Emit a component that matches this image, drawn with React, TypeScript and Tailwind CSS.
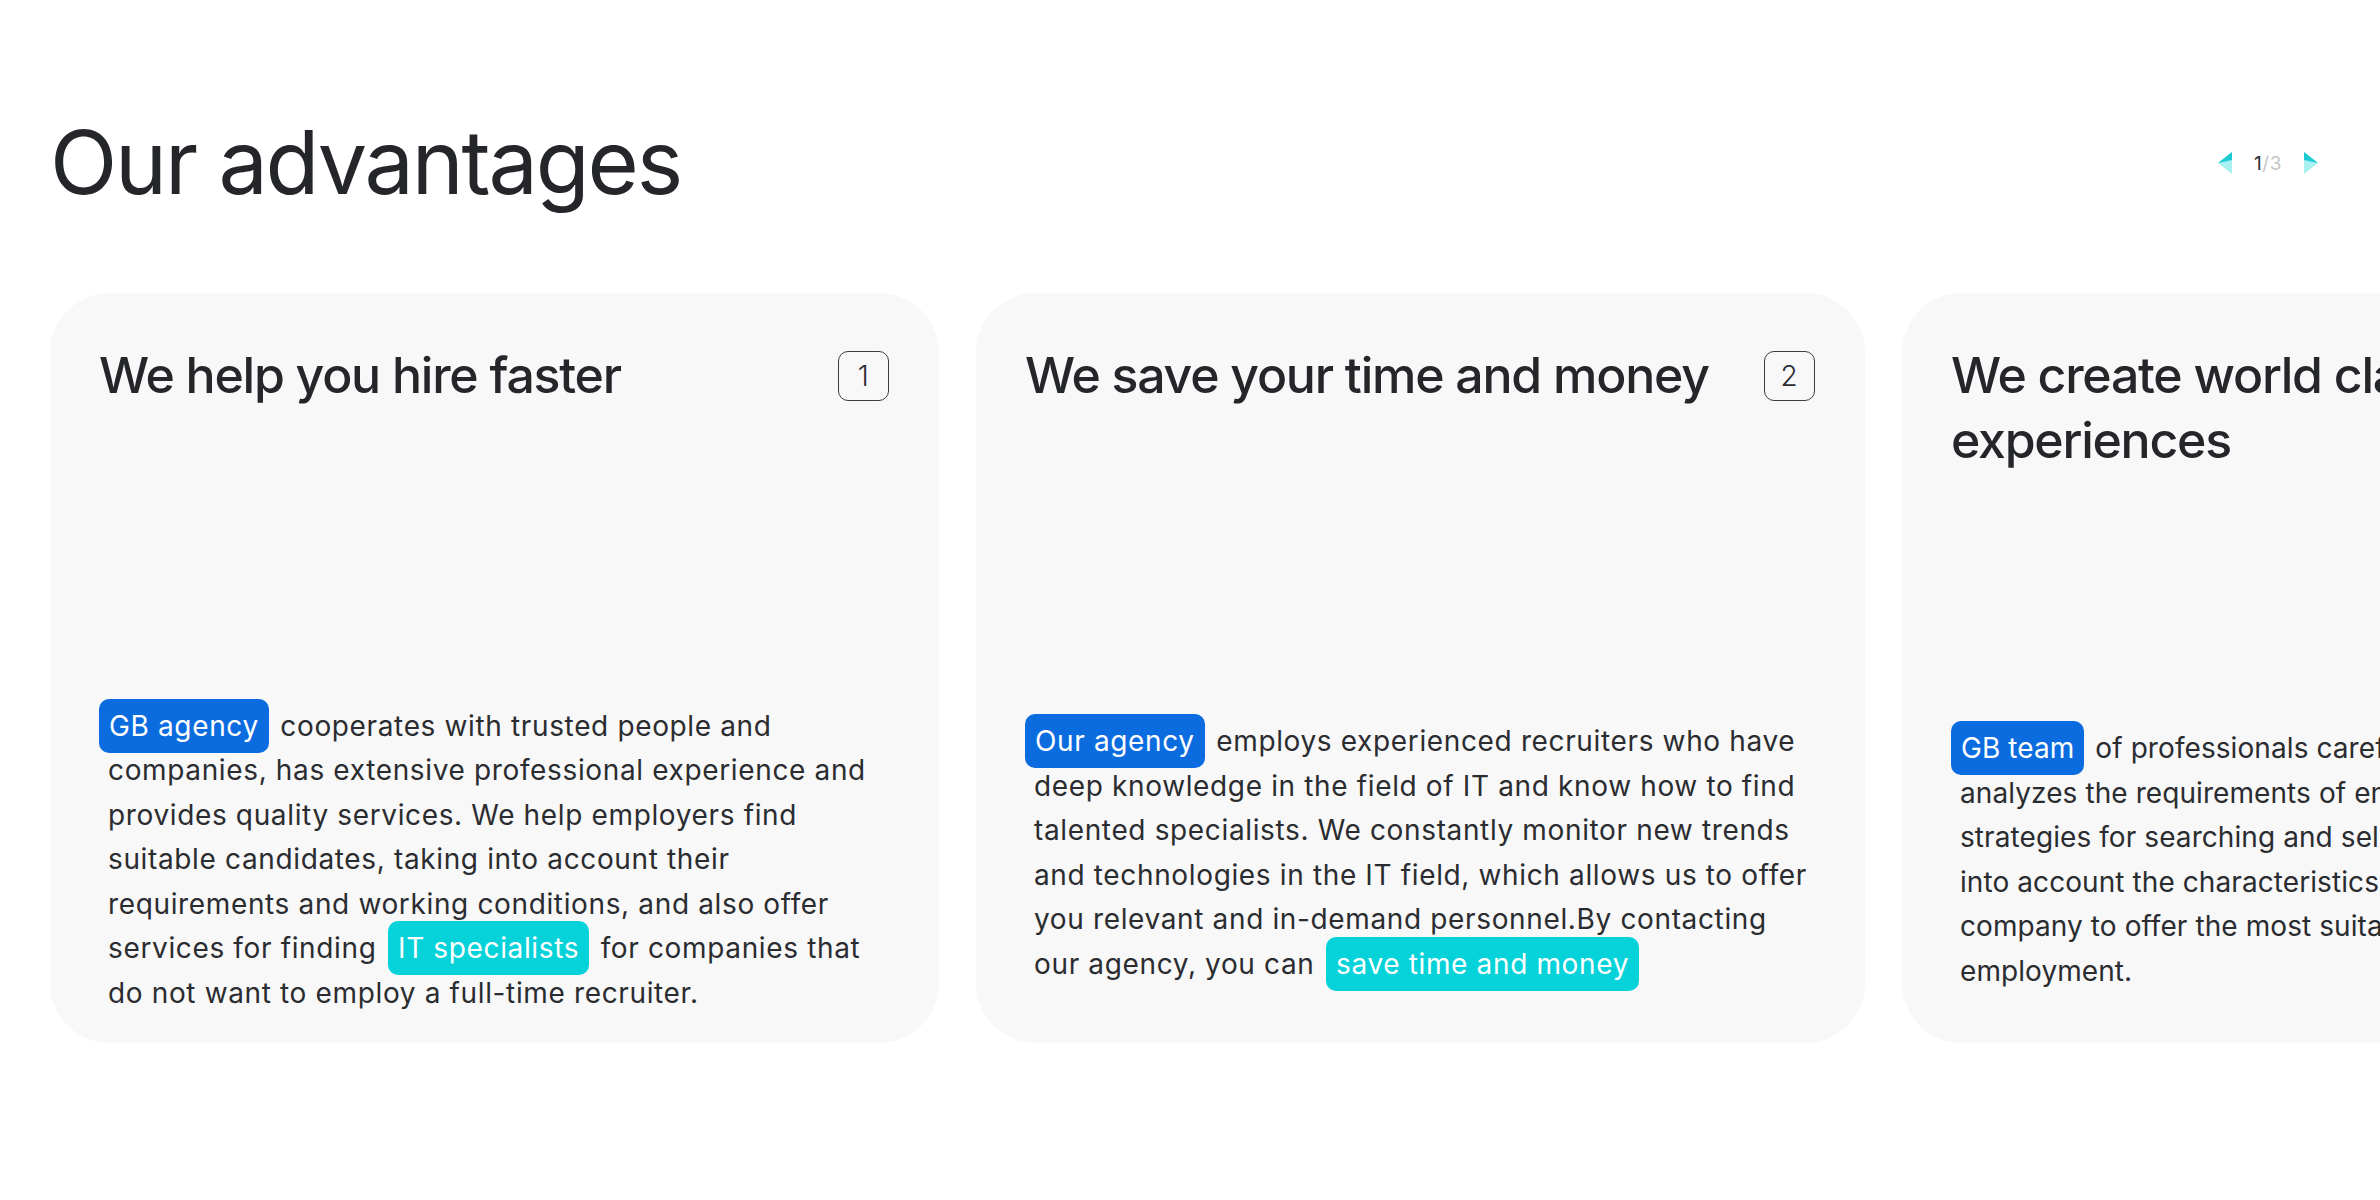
import type { ReactNode } from 'react';

const font = { fontFamily: 'Inter, "Noto Sans", sans-serif' };

function Tag({ tone, children }: { tone: 'blue' | 'cyan'; children: ReactNode }) {
  const bg = tone === 'blue' ? 'bg-[#0b6ce0]' : 'bg-[#05d2d9]';
  return (
    <span className={`${bg} mx-[3px] rounded-[10px] px-[10px] py-[10px] text-white`}>
      {children}
    </span>
  );
}

function Pager() {
  return (
    <div className="mt-[2px] flex items-center gap-[22px] pr-[62px]">
      <svg width="14" height="22" viewBox="0 0 14 22">
        <polygon points="14,0 0,11 14,22" fill="#a9f0f1" />
        <polygon points="14,0 0,11 14,8" fill="#1ccbd1" />
      </svg>
      <span className="text-[19px] leading-none tracking-[0.03em]">
        <span className="text-[#2a2c30]">1</span>
        <span className="text-[#c4c6c9]">/3</span>
      </span>
      <svg width="14" height="22" viewBox="0 0 14 22">
        <polygon points="0,0 14,11 0,22" fill="#a9f0f1" />
        <polygon points="0,0 14,11 0,8" fill="#1ccbd1" />
      </svg>
    </div>
  );
}

function Card({
  title,
  num,
  className,
  children,
}: {
  title: ReactNode;
  num?: number;
  className: string;
  children: ReactNode;
}) {
  return (
    <article
      className={`flex h-[750px] w-[889px] shrink-0 flex-col rounded-[60px] bg-[#f8f8f9] pt-[50px] pr-[50px] pl-[49px] ${className}`}
    >
      <div className="flex items-start justify-between gap-6">
        <h3 className="text-[50px] leading-[65px] font-medium tracking-[-0.025em] text-[#24262a]">
          {title}
        </h3>
        {num !== undefined && (
          <span className="mt-[8px] flex h-[50px] w-[51px] shrink-0 items-center justify-center rounded-[10px] border-[1.5px] border-[#3a3c40] text-[28px] font-light text-[#2a2c30]">
            {num}
          </span>
        )}
      </div>
      <p className="mt-auto pl-[9px] text-[28px] leading-[44.5px] whitespace-nowrap text-[#2a2c30]">
        {children}
      </p>
    </article>
  );
}

export default function App() {
  return (
    <div className="h-[1200px] w-[2380px] overflow-hidden bg-white" style={font}>
      <header className="flex items-center justify-between pt-[102px] pl-[50px]">
        <h2 className="text-[88px] leading-[120px] font-normal tracking-[-0.025em] text-[#24262a]">
          Our advantages
        </h2>
        <Pager />
      </header>

      <div className="mt-[71px] flex gap-[37px] pl-[50px]">
        <Card title="We help you hire faster" num={1} className="pb-[28px] tracking-[0.04em]">
          <span className="-ml-[12px]">
            <Tag tone="blue">GB agency</Tag>
          </span>{' '}
          cooperates with trusted people and
          <br />
          companies, has extensive professional experience and
          <br />
          provides quality services. We help employers find
          <br />
          suitable candidates, taking into account their
          <br />
          requirements and working conditions, and also offer
          <br />
          services for finding <Tag tone="cyan">IT specialists</Tag> for companies that
          <br />
          do not want to employ a full-time recruiter.
        </Card>

        <Card title="We save your time and money" num={2} className="pb-[57px] tracking-[0.04em]">
          <span className="-ml-[12px]">
            <Tag tone="blue">Our agency</Tag>
          </span>{' '}
          employs experienced recruiters who have
          <br />
          deep knowledge in the field of IT and know how to find
          <br />
          talented specialists. We constantly monitor new trends
          <br />
          and technologies in the IT field, which allows us to offer
          <br />
          you relevant and in-demand personnel.By contacting
          <br />
          our agency, you can <Tag tone="cyan">save time and money</Tag>
        </Card>

        <Card
          className="pb-[50px] tracking-[0.005em]"
          title={
            <>
              We create world class
              <br />
              experiences
            </>
          }
        >
          <span className="-ml-[12px]">
            <Tag tone="blue">GB team</Tag>
          </span>{' '}
          of professionals carefully
          <br />
          analyzes the requirements of employers and develops
          <br />
          strategies for searching and selecting candidates, taking
          <br />
          into account the characteristics of each
          <br />
          company to offer the most suitable options for
          <br />
          employment.
        </Card>
      </div>
    </div>
  );
}
